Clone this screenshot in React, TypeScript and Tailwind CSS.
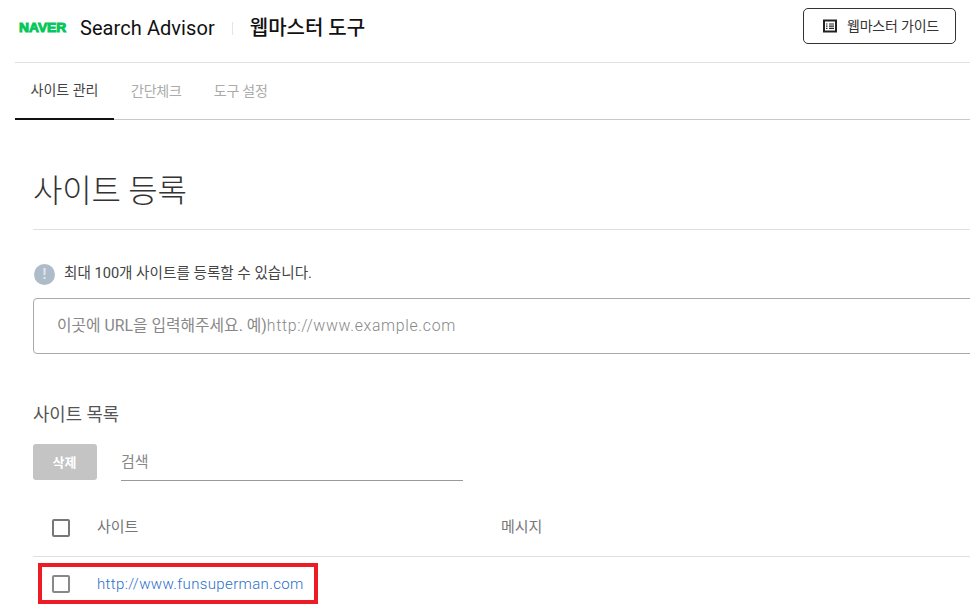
export default function App() {
  return (
    <div className="h-[616px] w-[970px] overflow-hidden bg-white font-['Roboto','Noto_Sans_CJK_KR',sans-serif] text-[#222]">
      <div className="pl-[15px]">
        <header className="flex h-[63px] items-center justify-between border-b border-[#e0e0e0] pb-[10px] pr-[14px]">
          <div className="flex items-center pt-[4px]">
            <span className="ml-[4px] w-[48px] origin-left scale-x-[1.15] font-['Liberation_Sans',sans-serif] text-[12px] font-bold leading-none text-[#03c75a] [-webkit-text-stroke:0.9px_#03c75a]">NAVER</span>
            <span className="ml-[13px] text-[20px] leading-none tracking-[0.07px] text-[#111]">Search Advisor</span>
            <span className="ml-[17px] h-[13px] w-px bg-[#e4e4e4]"></span>
            <span className="ml-[17px] text-[20px] font-medium leading-none text-[#111]">웹마스터 도구</span>
          </div>
          <button className="flex h-[36px] w-[153px] items-center gap-[10px] rounded-[5px] border border-[#333] pl-[19px] text-[14px] tracking-[-0.2px] text-[#333]">
            <svg width="14" height="14" viewBox="0 0 14 14" fill="none">
              <rect x="1" y="1.5" width="12" height="11" stroke="#222" strokeWidth="2" />
              <path d="M3 5h1.5M3 7.2h1.5M3 9.4h1.5M6 5h5M6 7.2h5M6 9.4h5" stroke="#222" strokeWidth="1.2" />
            </svg>
            웹마스터 가이드
          </button>
        </header>
        <nav className="flex h-[57px] border-b border-[#c8c8c8] text-[14px]">
          <a className="-mb-px flex h-[57px] w-[99px] items-center justify-center border-b-2 border-[#111] text-[#444]">사이트 관리</a>
          <a className="ml-[17px] flex items-center tracking-[-0.2px] text-[#aaa]">간단체크</a>
          <a className="ml-[32px] flex items-center tracking-[-0.2px] text-[#aaa]">도구 설정</a>
        </nav>
      </div>
      <main className="pl-[33px]">
        <h1 className="flex h-[110px] items-center border-b border-[#e0e0e0] pt-[33px] text-[32px] font-light leading-none tracking-[-0.2px] text-[#333]">사이트 등록</h1>
        <div className="mt-[33px] flex h-[22px] items-center gap-[9px] text-[14.6px] text-[#444]">
          <span className="ml-px flex h-[21px] w-[21px] items-center justify-center rounded-full bg-[#adbcc8] text-[14px] font-bold leading-none text-[#dfe6eb]">!</span>
          최대 100개 사이트를 등록할 수 있습니다.
        </div>
        <div className="-mr-[10px] mt-[13px] flex h-[56px] items-center rounded-[4px] border border-[#aaa] pl-[23px] text-[15.8px] text-[#888]">
          <span>이곳에 URL을 입력해주세요. 예)</span>
          <span className="font-light tracking-[0.69px]">http://www.example.com</span>
        </div>
        <h2 className="mt-[51px] text-[17.8px] font-normal leading-[20px] text-[#555]">사이트 목록</h2>
        <div className="mt-[19px] flex items-stretch">
          <button className="h-[36px] w-[64px] rounded-[3px] bg-[#c4c4c4] pr-[1px] pt-[1px] text-[13px] font-bold text-white">삭제</button>
          <div className="ml-[24px] flex h-[37px] w-[342px] items-center border-b border-[#999] text-[15px] text-[#888]">검색</div>
        </div>
        <div className="mt-[16px] flex h-[60px] items-center border-b border-[#e0e0e0] pt-[2px] text-[15px] text-[#777]">
          <span className="ml-[19px] h-[18px] w-[18px] rounded-[2px] border-2 border-[#777]"></span>
          <span className="ml-[27px] w-[404px]">사이트</span>
          <span>메시지</span>
        </div>
        <div className="flex h-[54px] items-center text-[15px] tracking-[0.36px] text-[#2a6fc9]">
          <span className="ml-[19px] h-[18px] w-[18px] rounded-[2px] border-2 border-[#888]"></span>
          <span className="ml-[27px] font-light">http://www.funsuperman.com</span>
        </div>
      </main>
      <div className="absolute left-[38px] top-[563px] h-[41px] w-[280px] border-[4px] border-[#ed1c24]"></div>
    </div>
  );
}
